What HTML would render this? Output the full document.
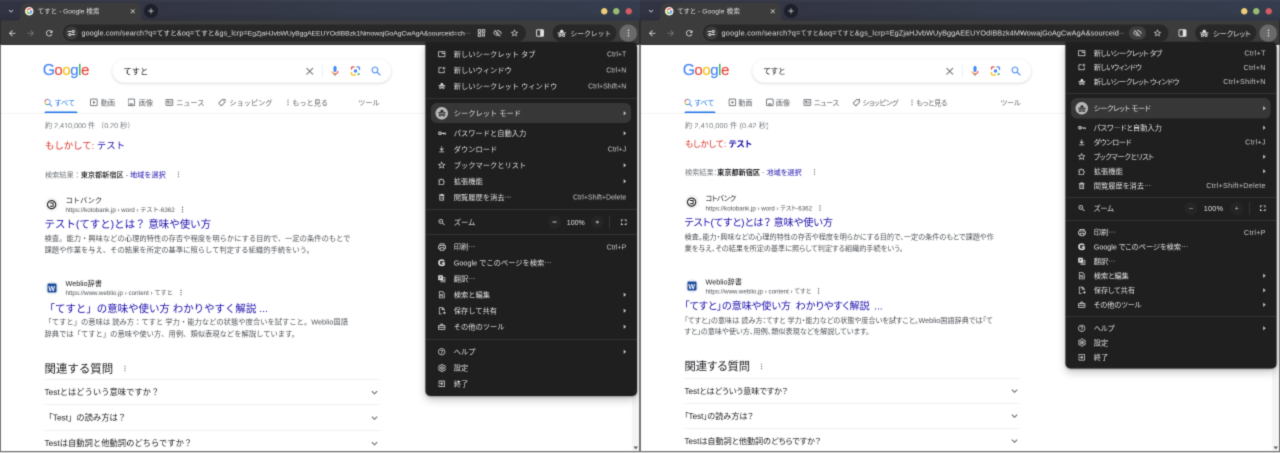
<!DOCTYPE html>
<html lang="ja"><head><meta charset="utf-8"><title>てすと - Google 検索</title>
<style>
html,body{margin:0;padding:0;background:#202124;overflow:hidden}
body{width:1280px;height:453px;position:relative;font-family:"Liberation Sans","Noto Sans CJK JP",sans-serif}
.win{position:absolute;top:0;width:1280px;height:906px;transform:scale(.5);transform-origin:0 0;overflow:hidden;background:#fff;will-change:transform;filter:url(#soft)}
.win *{box-sizing:border-box}
.t{position:absolute;white-space:nowrap;margin:0}
.b{position:absolute}
.i{position:absolute;display:block;overflow:visible}
.R .t{font-feature-settings:"palt" 1}
.R .np{font-feature-settings:normal}
b{font-weight:700}
.url i,.url u{font-style:normal;text-decoration:none;letter-spacing:0}
u.e,.url u{text-decoration:none;position:relative;top:-.33em}
.L .url i{font-size:13.5px}
.R .url i{font-size:12px}
.L .url .tl{letter-spacing:-.1px;font-size:13.6px}
.R .url .tl{letter-spacing:.2px}
.url u{font-size:11px;letter-spacing:-.5px}
u.e{letter-spacing:-.5px}

</style></head>
<body>
<svg width="0" height="0" style="position:absolute"><filter id="soft" x="0" y="0" width="100%" height="100%" color-interpolation-filters="sRGB"><feConvolveMatrix order="3" kernelMatrix="0.025 0.1 0.025 0.1 0.5 0.1 0.025 0.1 0.025" edgeMode="duplicate" preserveAlpha="true"/></filter></svg>
<div class="win L" style="left:0px">
<div class="t logo np" style="left:85.500px;top:117.200px;font-size:29.800px;line-height:44px;letter-spacing:-.750px;-webkit-text-stroke:.300px currentColor"><span style="color:#4285f4;font-size:31.500px;letter-spacing:-1.200px">G</span><span style="color:#ea4335">o</span><span style="color:#fbbc05">o</span><span style="color:#4285f4">g</span><span style="color:#34a853">l</span><span style="color:#ea4335">e</span></div>
<div class="b" style="left:225px;top:119px;width:557px;height:46px;background:#fff;border-radius:24px;box-shadow:0 2px 5px 1px rgba(64,60,67,.15)"></div>
<div class="t" style="left:247px;top:131px;font-size:16.5px;line-height:24px;color:#202124;">てすと</div>
<svg class="i" style="left:606.5px;top:129.5px" width="25" height="25" viewBox="0 0 24 24" fill="#70757a" ><path d="M19 6.41L17.59 5 12 10.59 6.41 5 5 6.41 10.59 12 5 17.59 6.41 19 12 13.41 17.59 19 19 17.59 13.41 12z"/></svg>
<div class="b" style="left:643.5px;top:128px;width:1px;height:28px;background:#e2e4e7"></div>
<svg class="i" style="left:658px;top:130px" width="24" height="24" viewBox="0 0 24 24"><rect x="9" y="2" width="6" height="12" rx="3" fill="#4285f4"/><path d="M11 18.920h2V22h-2z" fill="#34a853"/><path d="M7 12H5c0 1.930.780 3.680 2.050 4.950l1.410-1.410C7.560 14.630 7 13.380 7 12z" fill="#fbbc05"/><path d="M12 17c-1.380 0-2.630-.560-3.540-1.470l-1.410 1.410C8.320 18.220 10.070 19 12 19c3.870 0 7-3.130 7-7h-2c0 2.760-2.240 5-5 5z" fill="#ea4335"/></svg>
<svg class="i" style="left:699px;top:130px" width="24" height="24" viewBox="0 0 24 24"><path d="M4 8V6.500A2.500 2.500 0 0 1 6.500 4H9" fill="none" stroke="#ea4335" stroke-width="2.400" stroke-linecap="round"/><path d="M15 4h2.500A2.500 2.500 0 0 1 20 6.500V9" fill="none" stroke="#4285f4" stroke-width="2.400" stroke-linecap="round"/><path d="M4 15v2.500A2.500 2.500 0 0 0 6.500 20H12" fill="none" stroke="#fbbc05" stroke-width="2.400" stroke-linecap="round"/><circle cx="12" cy="12" r="3.300" fill="#4285f4"/><circle cx="18.300" cy="18.300" r="2" fill="#34a853"/></svg>
<svg class="i" style="left:740px;top:129.5px" width="25" height="25" viewBox="0 0 24 24" fill="#4285f4" ><path d="M15.5 14h-.79l-.28-.27C15.41 12.59 16 11.11 16 9.5 16 5.91 13.09 3 9.5 3S3 5.91 3 9.5 5.91 16 9.5 16c1.61 0 3.09-.59 4.23-1.57l.27.28v.79l5 4.99L20.49 19l-4.99-5zm-6 0C7.01 14 5 11.99 5 9.5S7.01 5 9.5 5 14 7.01 14 9.5 11.99 14 9.5 14z"/></svg>
<svg class="i" style="left:86.5px;top:196px" width="19" height="19" viewBox="0 0 16 16"><circle cx="6.800" cy="6.800" r="4.500" fill="none" stroke="#4285f4" stroke-width="1.300"/><path d="M2.300 6.800a4.500 4.500 0 0 1 4.500-4.500" fill="none" stroke="#ea4335" stroke-width="1.300"/><path d="M2.300 6.800a4.500 4.500 0 0 0 2.100 3.800" fill="none" stroke="#fbbc05" stroke-width="1.300"/><path d="M4.400 10.600a4.500 4.500 0 0 0 4 .400" fill="none" stroke="#34a853" stroke-width="1.300"/><path d="M10.200 10.200l3.800 3.800" stroke="#4285f4" stroke-width="1.500" stroke-linecap="round"/></svg>
<div class="t" style="left:109px;top:196px;font-size:14.3px;line-height:20px;color:#1a73e8;letter-spacing:0px">すべて</div>
<svg class="i" style="left:178.75px;top:196.25px" width="17.5" height="17.5" viewBox="0 0 16 16"><rect x="2" y="2" width="12" height="12" rx="1.500" fill="none" stroke="#5f6368" stroke-width="1.500"/><path d="M6.500 5.200v5.600L11 8z" fill="#5f6368"/></svg>
<div class="t" style="left:201.5px;top:196px;font-size:14.3px;line-height:20px;color:#5f6368;letter-spacing:0px">動画</div>
<svg class="i" style="left:253.75px;top:196.25px" width="17.5" height="17.5" viewBox="0 0 16 16"><rect x="2" y="2" width="12" height="12" rx="1.500" fill="none" stroke="#5f6368" stroke-width="1.500"/><path d="M4 12l2.500-3.200 1.800 2.200 1.500-1.700L12 12z" fill="#5f6368"/></svg>
<div class="t" style="left:277.5px;top:196px;font-size:14.3px;line-height:20px;color:#5f6368;letter-spacing:0px">画像</div>
<svg class="i" style="left:329.75px;top:196.25px" width="17.5" height="17.5" viewBox="0 0 16 16"><rect x="1.800" y="2.500" width="12.400" height="11" rx="1.200" fill="none" stroke="#5f6368" stroke-width="1.500"/><rect x="4" y="5" width="4" height="3.500" fill="#5f6368"/><path d="M9.500 5.500h2.500M9.500 8h2.500M4 10.800h8" stroke="#5f6368" stroke-width="1.200"/></svg>
<div class="t" style="left:352.5px;top:196px;font-size:14.3px;line-height:20px;color:#5f6368;letter-spacing:0px">ニュース</div>
<svg class="i" style="left:435.5px;top:197px" width="16" height="16" viewBox="0 0 16 16"><path d="M8.700 1.800h5.500v5.500l-6.800 6.800a1 1 0 0 1-1.400 0L1.900 10a1 1 0 0 1 0-1.400z" fill="none" stroke="#5f6368" stroke-width="1.500" stroke-linejoin="round"/><circle cx="11.300" cy="4.700" r="1" fill="#5f6368"/></svg>
<div class="t" style="left:459px;top:196px;font-size:14.3px;line-height:20px;color:#5f6368;letter-spacing:0px">ショッピング</div>
<svg class="i" style="left:573px;top:196px" width="6" height="18" viewBox="0 0 6 18"><circle cx="3" cy="4.4" r="1.25" fill="#5f6368"/><circle cx="3" cy="9" r="1.25" fill="#5f6368"/><circle cx="3" cy="13.6" r="1.25" fill="#5f6368"/></svg>
<div class="t" style="left:584.5px;top:196px;font-size:14.3px;line-height:20px;color:#5f6368;letter-spacing:0px">もっと見る</div>
<div class="t" style="left:716.5px;top:196px;font-size:14.3px;line-height:20px;color:#5f6368;">ツール</div>
<div class="b" style="left:89px;top:222.5px;width:66px;height:3px;background:#1a73e8;border-radius:3px 3px 0 0"></div>
<div class="b" style="left:0px;top:226.5px;width:1280px;height:1px;background:#e4e6e9"></div>
<div class="t" style="left:90px;top:241px;font-size:14.3px;line-height:20px;color:#70757a;letter-spacing:0px">約 2,410,000 件 （0.20 秒）</div>
<div class="t" style="left:90px;top:279px;font-size:18.8px;line-height:26px;color:#1a0dab;"><span style="color:#d93025">もしかして:</span> <b style="color:#1a0dab;font-weight:400">テスト</b></div>
<div class="t" style="left:90px;top:339.5px;font-size:14.3px;line-height:20px;color:#70757a;"><span style="color:#70757a">検索結果：</span><b style="color:#202124;font-weight:500">東京都新宿区</b> <span style="color:#70757a">-</span> <span style="color:#1a0dab">地域を選択</span></div>
<svg class="i" style="left:354px;top:339.5px" width="6" height="18" viewBox="0 0 6 18"><circle cx="3" cy="4.4" r="1.25" fill="#70757a"/><circle cx="3" cy="9" r="1.25" fill="#70757a"/><circle cx="3" cy="13.6" r="1.25" fill="#70757a"/></svg>
<div class="b" style="left:89.5px;top:395px;width:28px;height:28px;background:#f1f3f4;border-radius:50%"></div>
<svg class="i" style="left:93.25px;top:398.75px" width="20.5" height="20.5" viewBox="0 0 18 18"><circle cx="9" cy="9" r="7.200" fill="#fff" stroke="#111" stroke-width="1.900"/><path d="M5.800 6.200h5.800v5.600H5.800" fill="none" stroke="#111" stroke-width="1.700"/></svg>
<div class="t" style="left:131px;top:391px;font-size:14.5px;line-height:20px;color:#202124;letter-spacing:0px">コトバンク</div>
<div class="t" style="left:131px;top:411px;font-size:12.4px;line-height:18px;color:#4d5156;">https://kotobank.jp › word › テスト-6362</div>
<svg class="i" style="left:362px;top:410px" width="6" height="18" viewBox="0 0 6 18"><circle cx="3" cy="4.4" r="1.25" fill="#4d5156"/><circle cx="3" cy="9" r="1.25" fill="#4d5156"/><circle cx="3" cy="13.6" r="1.25" fill="#4d5156"/></svg>
<div class="t" style="left:89px;top:433.5px;font-size:20.9px;line-height:28px;color:#1a0dab;">テスト(てすと)とは？ 意味や使い方</div>
<div class="t" style="left:89px;top:466px;font-size:14.6px;line-height:22px;color:#4d5156;">検査。能力・興味などの心理的特性の存否や程度を明らかにする目的で、一定の条件のもとで</div>
<div class="t" style="left:89px;top:489px;font-size:14.6px;line-height:22px;color:#4d5156;">課題や作業を与え、その結果を所定の基準に照らして判定する組織的手続をいう。</div>
<div class="b" style="left:89.5px;top:562px;width:28px;height:28px;background:#f1f3f4;border-radius:50%"></div>
<div class="b" style="left:94.5px;top:567px;width:18px;height:18px;background:#1b4a9c;border-radius:2px"></div>
<div class="t np" style="left:96.8px;top:568.5px;font-size:14px;line-height:16px;color:#fff;"><b>W</b></div>
<div class="t" style="left:131px;top:557px;font-size:14.5px;line-height:20px;color:#202124;">Weblio辞書</div>
<div class="t" style="left:131px;top:577px;font-size:12.4px;line-height:18px;color:#4d5156;">https://www.weblio.jp › content › てすと</div>
<svg class="i" style="left:359px;top:576px" width="6" height="18" viewBox="0 0 6 18"><circle cx="3" cy="4.4" r="1.25" fill="#4d5156"/><circle cx="3" cy="9" r="1.25" fill="#4d5156"/><circle cx="3" cy="13.6" r="1.25" fill="#4d5156"/></svg>
<div class="t" style="left:89px;top:603px;font-size:20.9px;line-height:28px;color:#1a0dab;word-spacing:0px">「てすと」の意味や使い方 わかりやすく解説 ...</div>
<div class="t" style="left:89px;top:633px;font-size:14.6px;line-height:22px;color:#4d5156;">「てすと」の意味は 読み方：てすと 学力・能力などの状態や度合いを試すこと。Weblio国語</div>
<div class="t" style="left:89px;top:656.5px;font-size:14.6px;line-height:22px;color:#4d5156;">辞典では「てすと」の意味や使い方、用例、類似表現などを解説しています。</div>
<div class="t" style="left:89px;top:722px;font-size:22.9px;line-height:30px;color:#202124;">関連する質問</div>
<svg class="i" style="left:247px;top:728px" width="6" height="18" viewBox="0 0 6 18"><circle cx="3" cy="4.4" r="1.25" fill="#70757a"/><circle cx="3" cy="9" r="1.25" fill="#70757a"/><circle cx="3" cy="13.6" r="1.25" fill="#70757a"/></svg>
<div class="b" style="left:89px;top:758px;width:671px;height:1px;background:#dfe1e5"></div>
<div class="b" style="left:89px;top:809px;width:671px;height:1px;background:#dfe1e5"></div>
<div class="b" style="left:89px;top:860px;width:671px;height:1px;background:#dfe1e5"></div>
<div class="t" style="left:89px;top:773px;font-size:16.6px;line-height:24px;color:#202124;">Testとはどういう意味ですか？</div>
<svg class="i" style="left:737px;top:773px" width="24" height="24" viewBox="0 0 24 24" fill="#5f6368" ><path d="M16.59 8.59L12 13.17 7.41 8.59 6 10l6 6 6-6z"/></svg>
<div class="t" style="left:89px;top:824px;font-size:16.6px;line-height:24px;color:#202124;">「Test」の読み方は？</div>
<svg class="i" style="left:737px;top:824px" width="24" height="24" viewBox="0 0 24 24" fill="#5f6368" ><path d="M16.59 8.59L12 13.17 7.41 8.59 6 10l6 6 6-6z"/></svg>
<div class="t" style="left:89px;top:874.5px;font-size:16.6px;line-height:24px;color:#202124;">Testは自動詞と他動詞のどちらですか？</div>
<svg class="i" style="left:737px;top:874.5px" width="24" height="24" viewBox="0 0 24 24" fill="#5f6368" ><path d="M16.59 8.59L12 13.17 7.41 8.59 6 10l6 6 6-6z"/></svg>
<div class="b" style="left:1265px;top:89px;width:13px;height:813px;background:#f4f4f4;border-left:1px solid #e9e9e9"></div><svg class="i" style="left:1267px;top:893px" width="9" height="6" viewBox="0 0 9 6"><path d="M0 0h9L4.500 6z" fill="#5c5c5c"/></svg>
<div class="b" style="left:0px;top:0px;width:1280px;height:90px;background:#3c3c3c"></div>
<div class="b" style="left:0px;top:0px;width:1280px;height:41px;background:linear-gradient(rgba(255,255,255,.04) 0,rgba(255,255,255,0) 6px,rgba(0,0,0,0) 26px,rgba(0,0,0,.10) 41px),linear-gradient(90deg,#313242 0,#323443 20%,#353b4a 55%,#343c4d 100%)"></div>
<div class="b" style="left:41px;top:6px;width:241px;height:36px;background:#3c3c3c;border-radius:10px 10px 0 0"></div>
<svg class="i" style="left:31px;top:31.5px" width="10" height="10" viewBox="0 0 10 10"><path d="M10 0v10H0A10 10 0 0 0 10 0z" fill="#3c3c3c"/></svg>
<svg class="i" style="left:282px;top:31.5px" width="10" height="10" viewBox="0 0 10 10"><path d="M0 0v10h10A10 10 0 0 1 0 0z" fill="#3c3c3c"/></svg>
<div class="b" style="left:0px;top:87.5px;width:1280px;height:1.5px;background:#2f2f2f"></div>
<svg class="i" style="left:13px;top:13px" width="18" height="18" viewBox="0 0 24 24" fill="#e3e3e3" ><path d="M16.59 8.59L12 13.17 7.41 8.59 6 10l6 6 6-6z"/></svg>
<div class="b" style="left:50px;top:13.5px;width:17px;height:17px;background:#fff;border-radius:50%"></div>
<svg class="i" style="left:51.5px;top:15px" width="14" height="14" viewBox="0 0 24 24"><path d="M21.6 12.2c0-.7-.1-1.4-.2-2H12v3.9h5.4c-.2 1.2-.9 2.3-2 3v2.5h3.2c1.9-1.7 3-4.3 3-7.4z" fill="#4285f4"/><path d="M12 22c2.7 0 5-.9 6.6-2.4l-3.2-2.5c-.9.6-2 1-3.4 1-2.6 0-4.800-1.800-5.600-4.100H3.100v2.600C4.700 19.800 8.100 22 12 22z" fill="#34a853"/><path d="M6.400 14c-.2-.6-.3-1.300-.3-2s.1-1.400.3-2V7.400H3.100C2.400 8.800 2 10.300 2 12s.4 3.200 1.100 4.600l3.300-2.600z" fill="#fbbc05"/><path d="M12 5.900c1.500 0 2.800.5 3.800 1.500l2.900-2.900C17 2.900 14.700 2 12 2 8.100 2 4.700 4.200 3.100 7.400l3.300 2.600C7.200 7.700 9.400 5.900 12 5.900z" fill="#ea4335"/></svg>
<div class="t" style="left:75px;top:14.5px;font-size:13.2px;line-height:16px;color:#e3e3e3;letter-spacing:0px">てすと - Google 検索</div>
<svg class="i" style="left:257.5px;top:14.5px" width="15" height="15" viewBox="0 0 24 24" fill="#e3e3e3" ><path d="M19 6.41L17.59 5 12 10.59 6.41 5 5 6.41 10.59 12 5 17.59 6.41 19 12 13.41 17.59 19 19 17.59 13.41 12z"/></svg>
<div class="b" style="left:288px;top:8px;width:28px;height:28px;background:#1d202b;border-radius:50%"></div>
<svg class="i" style="left:293px;top:13px" width="18" height="18" viewBox="0 0 24 24" fill="#e3e3e3" ><path d="M19 13h-6v6h-2v-6H5v-2h6V5h2v6h6v2z"/></svg>
<div class="b" style="left:1201.5px;top:15.5px;width:13px;height:13px;background:#f0cb78;border-radius:50%"></div>
<div class="b" style="left:1225.5px;top:15.5px;width:13px;height:13px;background:#9abd73;border-radius:50%"></div>
<div class="b" style="left:1250.5px;top:15.5px;width:13px;height:13px;background:#d65a62;border-radius:50%"></div>
<svg class="i" style="left:14.5px;top:56.5px" width="19" height="19" viewBox="0 0 24 24" fill="#e3e3e3" ><path d="M20 11H7.83l5.59-5.59L12 4l-8 8 8 8 1.41-1.41L7.83 13H20v-2z"/></svg>
<svg class="i" style="left:51.5px;top:56.5px" width="19" height="19" viewBox="0 0 24 24" fill="#7d7d7d" ><path d="M12 4l-1.41 1.41L16.17 11H4v2h12.17l-5.58 5.59L12 20l8-8z"/></svg>
<svg class="i" style="left:88.5px;top:56.5px" width="19" height="19" viewBox="0 0 24 24" fill="#e3e3e3" ><path d="M17.65 6.35C16.2 4.9 14.21 4 12 4c-4.42 0-7.99 3.58-7.99 8s3.57 8 7.99 8c3.73 0 6.84-2.55 7.73-6h-2.08c-.82 2.33-3.04 4-5.65 4-3.31 0-6-2.69-6-6s2.69-6 6-6c1.66 0 3.14.69 4.22 1.78L13 11h7V4l-2.35 2.35z"/></svg>
<div class="b" style="left:126px;top:49px;width:926px;height:34px;background:#282828;border-radius:17px"></div>
<div class="b" style="left:130px;top:53px;width:26px;height:26px;background:#3c3c3c;border-radius:50%"></div>
<svg class="i" style="left:135px;top:58px" width="16" height="16" viewBox="0 0 16 16"><g stroke="#e3e3e3" stroke-width="2" fill="none" stroke-linecap="round"><path d="M1.500 5h6"/><path d="M8.500 11h6"/></g><circle cx="11.500" cy="5" r="2.200" fill="none" stroke="#e3e3e3" stroke-width="1.800"/><circle cx="4.500" cy="11" r="2.200" fill="none" stroke="#e3e3e3" stroke-width="1.800"/></svg>
<div class="t np url" style="left:163px;top:55px;width:790px;overflow:hidden;font-size:14.2px;line-height:22px;color:#e3e3e3;letter-spacing:0.32px">google.com/search?q=<i>てすと</i>&amp;oq=<i>てすと</i>&amp;gs_lcrp=<span class="tl">EgZjaHJvbWUyBggAEEUYOdIBBzk1NmowajGoAgCwAgA&amp;sourceid=ch</span><u>…</u></div>
<svg class="i" style="left:955px;top:58px" width="16" height="16" viewBox="0 0 16 16"><g fill="none" stroke="#e3e3e3" stroke-width="1.700"><rect x="1.500" y="1.500" width="5" height="5"/><rect x="9.500" y="1.500" width="5" height="5"/><rect x="1.500" y="9.500" width="5" height="5"/></g><g fill="#e3e3e3"><rect x="9" y="9" width="2.500" height="2.500"/><rect x="12.500" y="9" width="2.500" height="2.500"/><rect x="9" y="12.500" width="2.500" height="2.500"/><rect x="12.500" y="12.500" width="2.500" height="2.500"/></g></svg>
<svg class="i" style="left:986px;top:57px" width="18" height="18" viewBox="0 0 24 24"><path d="M1.800 12s3.700-6.300 10.200-6.300S22.200 12 22.200 12s-3.700 6.300-10.200 6.300S1.800 12 1.800 12z" fill="none" stroke="#e3e3e3" stroke-width="1.900"/><circle cx="12" cy="12" r="2.900" fill="none" stroke="#e3e3e3" stroke-width="1.900"/><path d="M5.300 3.300l15 17" stroke="#282828" stroke-width="4.200"/><path d="M4.200 3.800l15.300 17.200" stroke="#e3e3e3" stroke-width="1.900"/></svg>
<svg class="i" style="left:1020px;top:57px" width="18" height="18" viewBox="0 0 24 24" fill="#e3e3e3" ><path d="M22 9.24l-7.19-.62L12 2 9.19 8.63 2 9.24l5.46 4.73L5.82 21 12 17.27 18.18 21l-1.63-7.03L22 9.24zM12 15.4l-3.76 2.27 1-4.28-3.32-2.88 4.38-.38L12 6.1l1.71 4.04 4.38.38-3.32 2.88 1 4.28L12 15.4z"/></svg>
<svg class="i" style="left:1071px;top:57px" width="18" height="18" viewBox="0 0 18 18"><rect x="2" y="2.500" width="14" height="13" rx="2" fill="none" stroke="#e3e3e3" stroke-width="1.800"/><rect x="9.500" y="3" width="6" height="12" fill="#e3e3e3"/></svg>
<div class="b" style="left:1105px;top:49px;width:128px;height:34px;background:#282828;border-radius:17px"></div>
<svg class="i" style="left:1113.5px;top:56.5px" width="19" height="19" viewBox="0 0 24 24"><path d="M9 3.600h6l1.800 6.200H7.200z" fill="#e3e3e3"/><rect x="1.500" y="10" width="21" height="2.700" rx=".6" fill="#e3e3e3"/><circle cx="7.300" cy="17.400" r="2.700" fill="none" stroke="#e3e3e3" stroke-width="2.300"/><circle cx="16.700" cy="17.400" r="2.700" fill="none" stroke="#e3e3e3" stroke-width="2.300"/><path d="M10 16.800q2-1.300 4 0" fill="none" stroke="#e3e3e3" stroke-width="1.700"/></svg>
<div class="t" style="left:1141px;top:58px;font-size:13.6px;line-height:20px;color:#e3e3e3;">シークレット</div>
<div class="b" style="left:1239px;top:48.5px;width:35px;height:35px;background:#6a6a6a;border-radius:50%"></div>
<svg class="i" style="left:1253.5px;top:57px" width="6" height="18" viewBox="0 0 6 18"><circle cx="3" cy="3.5" r="1.6" fill="#e3e3e3"/><circle cx="3" cy="9" r="1.6" fill="#e3e3e3"/><circle cx="3" cy="14.5" r="1.6" fill="#e3e3e3"/></svg>
<div class="b" style="left:851px;top:84px;width:423px;height:707.5px;background:#1f1f1f;border-radius:3px 11px 10px 10px;box-shadow:0 8px 18px 0 rgba(0,0,0,.22),0 2px 5px 0 rgba(0,0,0,.22),0 0 0 1px rgba(0,0,0,.18)"></div>
<div class="b" style="left:851px;top:196px;width:423px;height:1px;background:#444746"></div>
<div class="b" style="left:851px;top:418px;width:423px;height:1px;background:#444746"></div>
<div class="b" style="left:851px;top:468.5px;width:423px;height:1px;background:#444746"></div>
<div class="b" style="left:851px;top:678px;width:423px;height:1px;background:#444746"></div>
<div class="b" style="left:862px;top:206px;width:400px;height:40px;background:#373737;border-radius:12px"></div>
<svg class="i" style="left:875px;top:99.5px" width="17" height="17" viewBox="0 0 24 24"><path d="M3 5h18v14H3z" fill="none" stroke="#e3e3e3" stroke-width="2" stroke-linejoin="round"/><path d="M13 5v4.500h8" fill="none" stroke="#e3e3e3" stroke-width="2" stroke-linejoin="round"/></svg>
<div class="t" style="left:907.5px;top:98.5px;font-size:14.5px;line-height:20px;color:#e3e3e3;letter-spacing:0px">新しいシークレット タブ</div>
<div class="t" style="right:27.5px;top:98px;font-size:14px;line-height:20px;color:#c7c7c7;letter-spacing:0px">Ctrl+T</div>
<svg class="i" style="left:875px;top:131.5px" width="17" height="17" viewBox="0 0 24 24"><path d="M12 5H4v14h15v-7" fill="none" stroke="#e3e3e3" stroke-width="2" stroke-linejoin="round"/><path d="M18 2v8M14 6h8" fill="none" stroke="#e3e3e3" stroke-width="2" stroke-linejoin="round"/></svg>
<div class="t" style="left:907.5px;top:130.5px;font-size:14.5px;line-height:20px;color:#e3e3e3;letter-spacing:0px">新しいウィンドウ</div>
<div class="t" style="right:27.5px;top:130px;font-size:14px;line-height:20px;color:#c7c7c7;letter-spacing:0px">Ctrl+N</div>
<svg class="i" style="left:875.75px;top:164.25px" width="15.5" height="15.5" viewBox="0 0 24 24"><path d="M9 3.600h6l1.800 6.200H7.200z" fill="#e3e3e3"/><rect x="1.500" y="10" width="21" height="2.700" rx=".6" fill="#e3e3e3"/><circle cx="7.300" cy="17.400" r="2.700" fill="none" stroke="#e3e3e3" stroke-width="2.300"/><circle cx="16.700" cy="17.400" r="2.700" fill="none" stroke="#e3e3e3" stroke-width="2.300"/><path d="M10 16.800q2-1.300 4 0" fill="none" stroke="#e3e3e3" stroke-width="1.700"/></svg>
<div class="t" style="left:907.5px;top:162.5px;font-size:14.5px;line-height:20px;color:#e3e3e3;letter-spacing:0px">新しいシークレット ウィンドウ</div>
<div class="t" style="right:27.5px;top:162px;font-size:14px;line-height:20px;color:#c7c7c7;letter-spacing:0px">Ctrl+Shift+N</div>
<div class="b" style="left:871px;top:213.5px;width:25px;height:25px;background:#b9b9b9;border-radius:50%"></div>
<svg class="i" style="left:874.5px;top:217px" width="18" height="18" viewBox="0 0 24 24"><path d="M9 3.600h6l1.800 6.200H7.200z" fill="#2a2a2a"/><rect x="1.500" y="10" width="21" height="2.700" rx=".6" fill="#2a2a2a"/><circle cx="7.300" cy="17.400" r="2.700" fill="none" stroke="#2a2a2a" stroke-width="2.300"/><circle cx="16.700" cy="17.400" r="2.700" fill="none" stroke="#2a2a2a" stroke-width="2.300"/><path d="M10 16.800q2-1.300 4 0" fill="none" stroke="#2a2a2a" stroke-width="1.700"/></svg>
<div class="t" style="left:907.5px;top:216.5px;font-size:14.5px;line-height:20px;color:#e3e3e3;letter-spacing:0px">シークレット モード</div>
<svg class="i" style="left:1240.5px;top:217.5px" width="17" height="17" viewBox="0 0 24 24" fill="#c7c7c7" ><path d="M9 6l7 6-7 6z"/></svg>
<svg class="i" style="left:875px;top:257.5px" width="17" height="17" viewBox="0 0 24 24"><circle cx="6.800" cy="12" r="3.600" fill="none" stroke="#e3e3e3" stroke-width="2.600"/><path d="M10.500 12h11.500v3.800M17.500 12v3.300" fill="none" stroke="#e3e3e3" stroke-width="2.600"/></svg>
<div class="t" style="left:907.5px;top:256.5px;font-size:14.5px;line-height:20px;color:#e3e3e3;letter-spacing:0px">パスワードと自動入力</div>
<svg class="i" style="left:1240.5px;top:257.5px" width="17" height="17" viewBox="0 0 24 24" fill="#c7c7c7" ><path d="M9 6l7 6-7 6z"/></svg>
<svg class="i" style="left:875px;top:289.5px" width="17" height="17" viewBox="0 0 24 24"><path d="M12 4v10.500M7 10l5 5 5-5M5 19.500h14" fill="none" stroke="#e3e3e3" stroke-width="2" stroke-linejoin="round"/></svg>
<div class="t" style="left:907.5px;top:288.5px;font-size:14.5px;line-height:20px;color:#e3e3e3;letter-spacing:0px">ダウンロード</div>
<div class="t" style="right:27.5px;top:288px;font-size:14px;line-height:20px;color:#c7c7c7;letter-spacing:0px">Ctrl+J</div>
<svg class="i" style="left:874.25px;top:320.75px" width="18.5" height="18.5" viewBox="0 0 24 24" fill="#e3e3e3" ><path d="M22 9.24l-7.19-.62L12 2 9.19 8.63 2 9.24l5.46 4.73L5.82 21 12 17.27 18.18 21l-1.63-7.03L22 9.24zM12 15.4l-3.76 2.27 1-4.28-3.32-2.88 4.38-.38L12 6.1l1.71 4.04 4.38.38-3.32 2.88 1 4.28L12 15.4z"/></svg>
<div class="t" style="left:907.5px;top:320.5px;font-size:14.5px;line-height:20px;color:#e3e3e3;letter-spacing:0px">ブックマークとリスト</div>
<svg class="i" style="left:1240.5px;top:321.5px" width="17" height="17" viewBox="0 0 24 24" fill="#c7c7c7" ><path d="M9 6l7 6-7 6z"/></svg>
<svg class="i" style="left:875px;top:353.5px" width="17" height="17" viewBox="0 0 24 24"><path d="M4 8H8.200a2.300 2.300 0 1 1 4.600 0H17V12.200a2.300 2.300 0 1 1 0 4.600V21H4V16.800a2.300 2.300 0 1 0 0-4.600z" fill="none" stroke="#e3e3e3" stroke-width="2" stroke-linejoin="round"/></svg>
<div class="t" style="left:907.5px;top:352.5px;font-size:14.5px;line-height:20px;color:#e3e3e3;letter-spacing:0px">拡張機能</div>
<svg class="i" style="left:1240.5px;top:353.5px" width="17" height="17" viewBox="0 0 24 24" fill="#c7c7c7" ><path d="M9 6l7 6-7 6z"/></svg>
<svg class="i" style="left:875px;top:385.5px" width="17" height="17" viewBox="0 0 24 24"><path d="M6.500 7.500h11V20h-11z" fill="none" stroke="#e3e3e3" stroke-width="2" stroke-linejoin="round"/><path d="M4 5.500h16M9.500 3.500h5" fill="none" stroke="#e3e3e3" stroke-width="2" stroke-linejoin="round"/><path d="M10 11v5.500M14 11v5.500" fill="none" stroke="#e3e3e3" stroke-width="1.500"/></svg>
<div class="t" style="left:907.5px;top:384.5px;font-size:14.5px;line-height:20px;color:#e3e3e3;letter-spacing:0px">閲覧履歴を消去<u class="e">…</u></div>
<div class="t" style="right:27.5px;top:384px;font-size:14px;line-height:20px;color:#c7c7c7;letter-spacing:0px">Ctrl+Shift+Delete</div>
<svg class="i" style="left:875px;top:435.5px" width="17" height="17" viewBox="0 0 24 24" fill="#e3e3e3" ><path d="M15.5 14h-.79l-.28-.27C15.41 12.59 16 11.11 16 9.5 16 5.91 13.09 3 9.5 3S3 5.91 3 9.5 5.91 16 9.5 16c1.61 0 3.09-.59 4.23-1.57l.27.28v.79l5 4.99L20.49 19l-4.99-5zm-6 0C7.01 14 5 11.99 5 9.5S7.01 5 9.5 5 14 7.01 14 9.5 11.99 14 9.5 14zM12 10h-2v2H9v-2H7V9h2V7h1v2h2v1z"/></svg>
<div class="t" style="left:907.5px;top:434.5px;font-size:14.5px;line-height:20px;color:#e3e3e3;letter-spacing:0px">ズーム</div>
<div class="b" style="left:1096px;top:431px;width:26px;height:26px;background:#252525;border-radius:50%"></div>
<div class="b" style="left:1181.5px;top:431px;width:26px;height:26px;background:#252525;border-radius:50%"></div>
<div class="b" style="left:1105px;top:443.2px;width:8px;height:1.6px;background:#c8c8c8"></div>
<div class="b" style="left:1191px;top:443.2px;width:7px;height:1.6px;background:#c8c8c8"></div>
<div class="b" style="left:1193.7px;top:440.5px;width:1.6px;height:7px;background:#c8c8c8"></div>
<div class="t np" style="left:1121.5px;width:60px;text-align:center;top:434.5px;font-size:14px;line-height:20px;color:#e3e3e3;letter-spacing:0px">100%</div>
<div class="b" style="left:1218.5px;top:431px;width:1px;height:26px;background:#444746"></div>
<svg class="i" style="left:1238px;top:434.5px" width="19" height="19" viewBox="0 0 24 24" fill="#e3e3e3" ><path d="M7 14H5v5h5v-2H7v-3zm-2-4h2V7h3V5H5v5zm12 7h-3v2h5v-5h-2v3zM14 5v2h3v3h2V5h-5z"/></svg>
<svg class="i" style="left:874.5px;top:484.5px" width="18" height="18" viewBox="0 0 24 24"><path d="M6.500 8V3.500h11V8" fill="none" stroke="#e3e3e3" stroke-width="2" stroke-linejoin="round"/><rect x="3" y="8" width="18" height="9" rx="2.500" fill="none" stroke="#e3e3e3" stroke-width="2" stroke-linejoin="round"/><path d="M7 14h10v6.500H7z" fill="#1f1f1f" stroke="#e3e3e3" stroke-width="2" stroke-linejoin="round"/><circle cx="17.500" cy="11.200" r="1" fill="#e3e3e3"/></svg>
<div class="t" style="left:907.5px;top:484px;font-size:14.5px;line-height:20px;color:#e3e3e3;letter-spacing:0px">印刷<u class="e">…</u></div>
<div class="t" style="right:27.5px;top:483.5px;font-size:14px;line-height:20px;color:#c7c7c7;letter-spacing:0px">Ctrl+P</div>
<div class="t np" style="left:876px;top:516px;font-size:18.5px;line-height:20px;color:#e3e3e3;-webkit-text-stroke:.6px #e3e3e3"><b>G</b></div>
<div class="t" style="left:907.5px;top:516px;font-size:14.5px;line-height:20px;color:#e3e3e3;letter-spacing:0px">Google でこのページを検索<u class="e">…</u></div>
<svg class="i" style="left:875px;top:549px" width="17" height="17" viewBox="0 0 24 24"><path d="M3 3h11v12H3z" fill="#e3e3e3" stroke="#e3e3e3" stroke-width="2" stroke-linejoin="round"/><path d="M5.500 7h6M8.500 5.500v1.500M6 12c2.200-1 3.800-2.800 4.300-5" fill="none" stroke="#1f1f1f" stroke-width="1.500"/><path d="M14 9h7v12H10v-6" fill="none" stroke="#e3e3e3" stroke-width="2" stroke-linejoin="round"/><path d="M13.200 18.500l2.300-6 2.300 6M14 17h3" fill="none" stroke="#e3e3e3" stroke-width="1.400"/></svg>
<div class="t" style="left:907.5px;top:548px;font-size:14.5px;line-height:20px;color:#e3e3e3;letter-spacing:0px">翻訳<u class="e">…</u></div>
<svg class="i" style="left:875px;top:581px" width="17" height="17" viewBox="0 0 24 24"><path d="M5 3h9l5 5v13H5z" fill="none" stroke="#e3e3e3" stroke-width="2" stroke-linejoin="round"/><circle cx="11.500" cy="13" r="2.800" fill="none" stroke="#e3e3e3" stroke-width="1.800"/><path d="M13.500 15l2.500 2.500" stroke="#e3e3e3" stroke-width="1.800"/></svg>
<div class="t" style="left:907.5px;top:580px;font-size:14.5px;line-height:20px;color:#e3e3e3;letter-spacing:0px">検索と編集</div>
<svg class="i" style="left:1240.5px;top:581px" width="17" height="17" viewBox="0 0 24 24" fill="#c7c7c7" ><path d="M9 6l7 6-7 6z"/></svg>
<svg class="i" style="left:875px;top:613px" width="17" height="17" viewBox="0 0 24 24"><path d="M19 12V8l-5-5H5v18h7" fill="none" stroke="#e3e3e3" stroke-width="2" stroke-linejoin="round"/><path d="M13 3v6h6" fill="none" stroke="#e3e3e3" stroke-width="2" stroke-linejoin="round"/><path d="M15 18h7M19 15l3 3-3 3" fill="none" stroke="#e3e3e3" stroke-width="2" stroke-linejoin="round"/></svg>
<div class="t" style="left:907.5px;top:612px;font-size:14.5px;line-height:20px;color:#e3e3e3;letter-spacing:0px">保存して共有</div>
<svg class="i" style="left:1240.5px;top:613px" width="17" height="17" viewBox="0 0 24 24" fill="#c7c7c7" ><path d="M9 6l7 6-7 6z"/></svg>
<svg class="i" style="left:875px;top:645px" width="17" height="17" viewBox="0 0 24 24"><rect x="3" y="8" width="18" height="12" rx="2" fill="none" stroke="#e3e3e3" stroke-width="2" stroke-linejoin="round"/><path d="M9 8V4.500h6V8M3 13.500h18" fill="none" stroke="#e3e3e3" stroke-width="2" stroke-linejoin="round"/></svg>
<div class="t" style="left:907.5px;top:644px;font-size:14.5px;line-height:20px;color:#e3e3e3;letter-spacing:0px">その他のツール</div>
<svg class="i" style="left:1240.5px;top:645px" width="17" height="17" viewBox="0 0 24 24" fill="#c7c7c7" ><path d="M9 6l7 6-7 6z"/></svg>
<svg class="i" style="left:875px;top:695px" width="17" height="17" viewBox="0 0 24 24" fill="#e3e3e3" ><path d="M11 18h2v-2h-2v2zm1-16C6.48 2 2 6.48 2 12s4.48 10 10 10 10-4.48 10-10S17.52 2 12 2zm0 18c-4.41 0-8-3.59-8-8s3.59-8 8-8 8 3.59 8 8-3.59 8-8 8zm0-14c-2.21 0-4 1.79-4 4h2c0-1.1.9-2 2-2s2 .9 2 2c0 2-3 1.75-3 5h2c0-2.25 3-2.5 3-5 0-2.21-1.79-4-4-4z"/></svg>
<div class="t" style="left:907.5px;top:694px;font-size:14.5px;line-height:20px;color:#e3e3e3;letter-spacing:0px">ヘルプ</div>
<svg class="i" style="left:1240.5px;top:695px" width="17" height="17" viewBox="0 0 24 24" fill="#c7c7c7" ><path d="M9 6l7 6-7 6z"/></svg>
<svg class="i" style="left:874.5px;top:726.5px" width="18" height="18" viewBox="0 0 24 24"><path d="M19.14 12.94c.04-.3.06-.61.06-.94 0-.32-.02-.64-.07-.94l2.03-1.58c.18-.14.23-.41.12-.61l-1.92-3.32c-.12-.22-.37-.29-.59-.22l-2.39.96c-.5-.38-1.03-.7-1.62-.94l-.36-2.54c-.04-.24-.24-.41-.48-.41h-3.84c-.24 0-.43.17-.47.41l-.36 2.54c-.59.24-1.13.57-1.62.94l-2.39-.96c-.22-.08-.47 0-.59.22L2.74 8.87c-.12.21-.08.47.12.61l2.03 1.58c-.05.3-.09.63-.09.94s.02.64.07.94l-2.03 1.58c-.18.14-.23.41-.12.61l1.92 3.32c.12.22.37.29.59.22l2.39-.96c.5.38 1.03.7 1.62.94l.36 2.54c.05.24.24.41.48.41h3.84c.24 0 .44-.17.47-.41l.36-2.54c.59-.24 1.13-.56 1.62-.94l2.39.96c.22.08.47 0 .59-.22l1.92-3.32c.12-.22.07-.47-.12-.61l-2.01-1.58zM12 15.6c-1.98 0-3.6-1.62-3.6-3.6s1.62-3.6 3.6-3.6 3.6 1.62 3.6 3.6-1.62 3.6-3.6 3.6z" fill="none" stroke="#e3e3e3" stroke-width="1.700" stroke-linejoin="round"/><circle cx="12" cy="12" r="1.600" fill="#e3e3e3"/></svg>
<div class="t" style="left:907.5px;top:726px;font-size:14.5px;line-height:20px;color:#e3e3e3;letter-spacing:0px">設定</div>
<svg class="i" style="left:875px;top:759px" width="17" height="17" viewBox="0 0 24 24" fill="#e3e3e3" ><path d="M19 3H5c-1.11 0-2 .9-2 2v4h2V5h14v14H5v-4H3v4c0 1.1.89 2 2 2h14c1.1 0 2-.9 2-2V5c0-1.1-.9-2-2-2zm-8.92 12.58L11.5 17l5-5-5-5-1.42 1.41L12.67 11H3v2h9.67l-2.59 2.58z"/></svg>
<div class="t" style="left:907.5px;top:758px;font-size:14.5px;line-height:20px;color:#e3e3e3;letter-spacing:0px">終了</div>
<div class="b" style="left:0px;top:41px;width:2px;height:48px;background:#2c2c2c"></div><div class="b" style="left:1278px;top:41px;width:2px;height:48px;background:#2c2c2c"></div><div class="b" style="left:0px;top:89px;width:2px;height:815px;background:#757575"></div><div class="b" style="left:1278px;top:89px;width:2px;height:815px;background:#757575"></div><div class="b" style="left:0px;top:901.5px;width:1280px;height:2.5px;background:#707070"></div><div class="b" style="left:0px;top:904px;width:1280px;height:2px;background:#dcdcdc"></div>
</div>
<div class="win R" style="left:640px">
<div class="t logo np" style="left:85.500px;top:117.200px;font-size:29.800px;line-height:44px;letter-spacing:-.750px;-webkit-text-stroke:.300px currentColor"><span style="color:#4285f4;font-size:31.500px;letter-spacing:-1.200px">G</span><span style="color:#ea4335">o</span><span style="color:#fbbc05">o</span><span style="color:#4285f4">g</span><span style="color:#34a853">l</span><span style="color:#ea4335">e</span></div>
<div class="b" style="left:225px;top:119px;width:557px;height:46px;background:#fff;border-radius:24px;box-shadow:0 2px 5px 1px rgba(64,60,67,.15)"></div>
<div class="t" style="left:247px;top:131px;font-size:16px;line-height:24px;color:#202124;">てすと</div>
<svg class="i" style="left:606.5px;top:129.5px" width="25" height="25" viewBox="0 0 24 24" fill="#70757a" ><path d="M19 6.41L17.59 5 12 10.59 6.41 5 5 6.41 10.59 12 5 17.59 6.41 19 12 13.41 17.59 19 19 17.59 13.41 12z"/></svg>
<div class="b" style="left:643.5px;top:128px;width:1px;height:28px;background:#e2e4e7"></div>
<svg class="i" style="left:658px;top:130px" width="24" height="24" viewBox="0 0 24 24"><rect x="9" y="2" width="6" height="12" rx="3" fill="#4285f4"/><path d="M11 18.920h2V22h-2z" fill="#34a853"/><path d="M7 12H5c0 1.930.780 3.680 2.050 4.950l1.410-1.410C7.560 14.630 7 13.380 7 12z" fill="#fbbc05"/><path d="M12 17c-1.380 0-2.630-.560-3.540-1.470l-1.410 1.410C8.320 18.220 10.070 19 12 19c3.870 0 7-3.130 7-7h-2c0 2.760-2.240 5-5 5z" fill="#ea4335"/></svg>
<svg class="i" style="left:699px;top:130px" width="24" height="24" viewBox="0 0 24 24"><path d="M4 8V6.500A2.500 2.500 0 0 1 6.500 4H9" fill="none" stroke="#ea4335" stroke-width="2.400" stroke-linecap="round"/><path d="M15 4h2.500A2.500 2.500 0 0 1 20 6.500V9" fill="none" stroke="#4285f4" stroke-width="2.400" stroke-linecap="round"/><path d="M4 15v2.500A2.500 2.500 0 0 0 6.500 20H12" fill="none" stroke="#fbbc05" stroke-width="2.400" stroke-linecap="round"/><circle cx="12" cy="12" r="3.300" fill="#4285f4"/><circle cx="18.300" cy="18.300" r="2" fill="#34a853"/></svg>
<svg class="i" style="left:740px;top:129.5px" width="25" height="25" viewBox="0 0 24 24" fill="#4285f4" ><path d="M15.5 14h-.79l-.28-.27C15.41 12.59 16 11.11 16 9.5 16 5.91 13.09 3 9.5 3S3 5.91 3 9.5 5.91 16 9.5 16c1.61 0 3.09-.59 4.23-1.57l.27.28v.79l5 4.99L20.49 19l-4.99-5zm-6 0C7.01 14 5 11.99 5 9.5S7.01 5 9.5 5 14 7.01 14 9.5 11.99 14 9.5 14z"/></svg>
<svg class="i" style="left:86.5px;top:196px" width="19" height="19" viewBox="0 0 16 16"><circle cx="6.800" cy="6.800" r="4.500" fill="none" stroke="#4285f4" stroke-width="1.300"/><path d="M2.300 6.800a4.500 4.500 0 0 1 4.500-4.500" fill="none" stroke="#ea4335" stroke-width="1.300"/><path d="M2.300 6.800a4.500 4.500 0 0 0 2.100 3.800" fill="none" stroke="#fbbc05" stroke-width="1.300"/><path d="M4.400 10.600a4.500 4.500 0 0 0 4 .400" fill="none" stroke="#34a853" stroke-width="1.300"/><path d="M10.200 10.200l3.800 3.800" stroke="#4285f4" stroke-width="1.500" stroke-linecap="round"/></svg>
<div class="t" style="left:109px;top:196px;font-size:14.3px;line-height:20px;color:#1a73e8;letter-spacing:0px">すべて</div>
<svg class="i" style="left:175.75px;top:196.25px" width="17.5" height="17.5" viewBox="0 0 16 16"><rect x="2" y="2" width="12" height="12" rx="1.500" fill="none" stroke="#5f6368" stroke-width="1.500"/><path d="M6.500 5.200v5.600L11 8z" fill="#5f6368"/></svg>
<div class="t" style="left:196.5px;top:196px;font-size:14.3px;line-height:20px;color:#5f6368;letter-spacing:0px">動画</div>
<svg class="i" style="left:250.75px;top:196.25px" width="17.5" height="17.5" viewBox="0 0 16 16"><rect x="2" y="2" width="12" height="12" rx="1.500" fill="none" stroke="#5f6368" stroke-width="1.500"/><path d="M4 12l2.500-3.200 1.800 2.200 1.500-1.700L12 12z" fill="#5f6368"/></svg>
<div class="t" style="left:271.5px;top:196px;font-size:14.3px;line-height:20px;color:#5f6368;letter-spacing:0px">画像</div>
<svg class="i" style="left:325.75px;top:196.25px" width="17.5" height="17.5" viewBox="0 0 16 16"><rect x="1.800" y="2.500" width="12.400" height="11" rx="1.200" fill="none" stroke="#5f6368" stroke-width="1.500"/><rect x="4" y="5" width="4" height="3.500" fill="#5f6368"/><path d="M9.500 5.500h2.500M9.500 8h2.500M4 10.800h8" stroke="#5f6368" stroke-width="1.200"/></svg>
<div class="t" style="left:348px;top:196px;font-size:14.3px;line-height:20px;color:#5f6368;letter-spacing:-0.45px">ニュース</div>
<svg class="i" style="left:424.5px;top:197px" width="16" height="16" viewBox="0 0 16 16"><path d="M8.700 1.800h5.500v5.500l-6.800 6.800a1 1 0 0 1-1.400 0L1.900 10a1 1 0 0 1 0-1.400z" fill="none" stroke="#5f6368" stroke-width="1.500" stroke-linejoin="round"/><circle cx="11.300" cy="4.700" r="1" fill="#5f6368"/></svg>
<div class="t" style="left:445px;top:196px;font-size:14.3px;line-height:20px;color:#5f6368;letter-spacing:-0.45px">ショッピング</div>
<svg class="i" style="left:541px;top:196px" width="6" height="18" viewBox="0 0 6 18"><circle cx="3" cy="4.4" r="1.25" fill="#5f6368"/><circle cx="3" cy="9" r="1.25" fill="#5f6368"/><circle cx="3" cy="13.6" r="1.25" fill="#5f6368"/></svg>
<div class="t" style="left:552px;top:196px;font-size:14.3px;line-height:20px;color:#5f6368;letter-spacing:-0.45px">もっと見る</div>
<div class="t" style="left:721px;top:196px;font-size:14.3px;line-height:20px;color:#5f6368;">ツール</div>
<div class="b" style="left:89px;top:222.5px;width:62px;height:3px;background:#1a73e8;border-radius:3px 3px 0 0"></div>
<div class="b" style="left:0px;top:226.5px;width:1280px;height:1px;background:#e4e6e9"></div>
<div class="t" style="left:90px;top:241px;font-size:14.3px;line-height:20px;color:#70757a;letter-spacing:0.35px">約 2,410,000 件 (0.42 秒)</div>
<div class="t" style="left:90px;top:275px;font-size:17.3px;line-height:26px;color:#1a0dab;"><span style="color:#d93025">もしかして:</span> <b style="color:#1a0dab;font-weight:700">テスト</b></div>
<div class="t" style="left:90px;top:335px;font-size:14.3px;line-height:20px;color:#70757a;"><span style="color:#70757a">検索結果：</span><b style="color:#202124;font-weight:700">東京都新宿区</b> <span style="color:#70757a">-</span> <span style="color:#1a0dab">地域を選択</span></div>
<svg class="i" style="left:346px;top:335px" width="6" height="18" viewBox="0 0 6 18"><circle cx="3" cy="4.4" r="1.25" fill="#70757a"/><circle cx="3" cy="9" r="1.25" fill="#70757a"/><circle cx="3" cy="13.6" r="1.25" fill="#70757a"/></svg>
<div class="b" style="left:89.5px;top:390px;width:28px;height:28px;background:#f1f3f4;border-radius:50%"></div>
<svg class="i" style="left:93.25px;top:393.75px" width="20.5" height="20.5" viewBox="0 0 18 18"><circle cx="9" cy="9" r="7.200" fill="#fff" stroke="#111" stroke-width="1.900"/><path d="M5.800 6.200h5.800v5.600H5.800" fill="none" stroke="#111" stroke-width="1.700"/></svg>
<div class="t" style="left:131px;top:386.5px;font-size:14.5px;line-height:20px;color:#202124;letter-spacing:-1px">コトバンク</div>
<div class="t" style="left:131px;top:408px;font-size:12.4px;line-height:18px;color:#4d5156;">https://kotobank.jp › word › テスト-6362</div>
<svg class="i" style="left:356.5px;top:407px" width="6" height="18" viewBox="0 0 6 18"><circle cx="3" cy="4.4" r="1.25" fill="#4d5156"/><circle cx="3" cy="9" r="1.25" fill="#4d5156"/><circle cx="3" cy="13.6" r="1.25" fill="#4d5156"/></svg>
<div class="t" style="left:89px;top:430.6px;font-size:20.2px;line-height:28px;color:#1a0dab;">テスト(てすと)とは？ 意味や使い方</div>
<div class="t" style="left:89px;top:463px;font-size:14.3px;line-height:22px;color:#4d5156;">検査。能力・興味などの心理的特性の存否や程度を明らかにする目的で、一定の条件のもとで課題や作</div>
<div class="t" style="left:89px;top:486.4px;font-size:14.3px;line-height:22px;color:#4d5156;">業を与え、その結果を所定の基準に照らして判定する組織的手続をいう。</div>
<div class="b" style="left:89.5px;top:558.3px;width:28px;height:28px;background:#f1f3f4;border-radius:50%"></div>
<div class="b" style="left:94.5px;top:563.3px;width:18px;height:18px;background:#1b4a9c;border-radius:2px"></div>
<div class="t np" style="left:96.8px;top:564.8px;font-size:14px;line-height:16px;color:#fff;"><b>W</b></div>
<div class="t" style="left:131px;top:553.6px;font-size:14.5px;line-height:20px;color:#202124;">Weblio辞書</div>
<div class="t" style="left:131px;top:574px;font-size:12.4px;line-height:18px;color:#4d5156;">https://www.weblio.jp › content › てすと</div>
<svg class="i" style="left:353.5px;top:573px" width="6" height="18" viewBox="0 0 6 18"><circle cx="3" cy="4.4" r="1.25" fill="#4d5156"/><circle cx="3" cy="9" r="1.25" fill="#4d5156"/><circle cx="3" cy="13.6" r="1.25" fill="#4d5156"/></svg>
<div class="t" style="left:89px;top:598px;font-size:20.2px;line-height:28px;color:#1a0dab;word-spacing:3.5px">「てすと」の意味や使い方 わかりやすく解説 ...</div>
<div class="t" style="left:89px;top:630px;font-size:14.3px;line-height:22px;color:#4d5156;">「てすと」の意味は 読み方：てすと 学力・能力などの状態や度合いを試すこと。Weblio国語辞典では「て</div>
<div class="t" style="left:89px;top:652px;font-size:14.3px;line-height:22px;color:#4d5156;">すと」の意味や使い方、用例、類似表現などを解説しています。</div>
<div class="t" style="left:89px;top:718.4px;font-size:22.6px;line-height:30px;color:#202124;">関連する質問</div>
<svg class="i" style="left:239.5px;top:724.4px" width="6" height="18" viewBox="0 0 6 18"><circle cx="3" cy="4.4" r="1.25" fill="#70757a"/><circle cx="3" cy="9" r="1.25" fill="#70757a"/><circle cx="3" cy="13.6" r="1.25" fill="#70757a"/></svg>
<div class="b" style="left:89px;top:756.1px;width:671px;height:1px;background:#dfe1e5"></div>
<div class="b" style="left:89px;top:806.2px;width:671px;height:1px;background:#dfe1e5"></div>
<div class="b" style="left:89px;top:856.5px;width:671px;height:1px;background:#dfe1e5"></div>
<div class="t" style="left:89px;top:770px;font-size:16.2px;line-height:24px;color:#202124;">Testとはどういう意味ですか？</div>
<svg class="i" style="left:737px;top:770px" width="24" height="24" viewBox="0 0 24 24" fill="#5f6368" ><path d="M16.59 8.59L12 13.17 7.41 8.59 6 10l6 6 6-6z"/></svg>
<div class="t" style="left:89px;top:820px;font-size:16.2px;line-height:24px;color:#202124;">「Test」の読み方は？</div>
<svg class="i" style="left:737px;top:820px" width="24" height="24" viewBox="0 0 24 24" fill="#5f6368" ><path d="M16.59 8.59L12 13.17 7.41 8.59 6 10l6 6 6-6z"/></svg>
<div class="t" style="left:89px;top:870px;font-size:16.2px;line-height:24px;color:#202124;">Testは自動詞と他動詞のどちらですか？</div>
<svg class="i" style="left:737px;top:870px" width="24" height="24" viewBox="0 0 24 24" fill="#5f6368" ><path d="M16.59 8.59L12 13.17 7.41 8.59 6 10l6 6 6-6z"/></svg>
<div class="b" style="left:1265px;top:89px;width:13px;height:813px;background:#f4f4f4;border-left:1px solid #e9e9e9"></div><svg class="i" style="left:1267px;top:893px" width="9" height="6" viewBox="0 0 9 6"><path d="M0 0h9L4.500 6z" fill="#5c5c5c"/></svg>
<div class="b" style="left:0px;top:0px;width:1280px;height:90px;background:#3c3c3c"></div>
<div class="b" style="left:0px;top:0px;width:1280px;height:41px;background:linear-gradient(rgba(255,255,255,.04) 0,rgba(255,255,255,0) 6px,rgba(0,0,0,0) 26px,rgba(0,0,0,.10) 41px),linear-gradient(90deg,#313242 0,#323443 20%,#353b4a 55%,#343c4d 100%)"></div>
<div class="b" style="left:41px;top:6px;width:241px;height:36px;background:#3c3c3c;border-radius:10px 10px 0 0"></div>
<svg class="i" style="left:31px;top:31.5px" width="10" height="10" viewBox="0 0 10 10"><path d="M10 0v10H0A10 10 0 0 0 10 0z" fill="#3c3c3c"/></svg>
<svg class="i" style="left:282px;top:31.5px" width="10" height="10" viewBox="0 0 10 10"><path d="M0 0v10h10A10 10 0 0 1 0 0z" fill="#3c3c3c"/></svg>
<div class="b" style="left:0px;top:87.5px;width:1280px;height:1.5px;background:#2f2f2f"></div>
<svg class="i" style="left:13px;top:13px" width="18" height="18" viewBox="0 0 24 24" fill="#e3e3e3" ><path d="M16.59 8.59L12 13.17 7.41 8.59 6 10l6 6 6-6z"/></svg>
<div class="b" style="left:50px;top:13.5px;width:17px;height:17px;background:#fff;border-radius:50%"></div>
<svg class="i" style="left:51.5px;top:15px" width="14" height="14" viewBox="0 0 24 24"><path d="M21.6 12.2c0-.7-.1-1.4-.2-2H12v3.9h5.4c-.2 1.2-.9 2.3-2 3v2.5h3.2c1.9-1.7 3-4.3 3-7.4z" fill="#4285f4"/><path d="M12 22c2.7 0 5-.9 6.6-2.4l-3.2-2.5c-.9.6-2 1-3.4 1-2.6 0-4.800-1.800-5.600-4.100H3.100v2.600C4.700 19.800 8.100 22 12 22z" fill="#34a853"/><path d="M6.400 14c-.2-.6-.3-1.300-.3-2s.1-1.400.3-2V7.400H3.100C2.400 8.800 2 10.300 2 12s.4 3.200 1.100 4.600l3.300-2.600z" fill="#fbbc05"/><path d="M12 5.900c1.500 0 2.800.5 3.800 1.500l2.900-2.900C17 2.900 14.700 2 12 2 8.100 2 4.700 4.200 3.100 7.400l3.300 2.600C7.200 7.700 9.400 5.900 12 5.900z" fill="#ea4335"/></svg>
<div class="t" style="left:75px;top:14.5px;font-size:13.2px;line-height:16px;color:#e3e3e3;letter-spacing:0.35px">てすと - Google 検索</div>
<svg class="i" style="left:257.5px;top:14.5px" width="15" height="15" viewBox="0 0 24 24" fill="#e3e3e3" ><path d="M19 6.41L17.59 5 12 10.59 6.41 5 5 6.41 10.59 12 5 17.59 6.41 19 12 13.41 17.59 19 19 17.59 13.41 12z"/></svg>
<div class="b" style="left:288px;top:8px;width:28px;height:28px;background:#1d202b;border-radius:50%"></div>
<svg class="i" style="left:293px;top:13px" width="18" height="18" viewBox="0 0 24 24" fill="#e3e3e3" ><path d="M19 13h-6v6h-2v-6H5v-2h6V5h2v6h6v2z"/></svg>
<div class="b" style="left:1201.5px;top:15.5px;width:13px;height:13px;background:#f0cb78;border-radius:50%"></div>
<div class="b" style="left:1225.5px;top:15.5px;width:13px;height:13px;background:#9abd73;border-radius:50%"></div>
<div class="b" style="left:1250.5px;top:15.5px;width:13px;height:13px;background:#d65a62;border-radius:50%"></div>
<svg class="i" style="left:14.5px;top:56.5px" width="19" height="19" viewBox="0 0 24 24" fill="#e3e3e3" ><path d="M20 11H7.83l5.59-5.59L12 4l-8 8 8 8 1.41-1.41L7.83 13H20v-2z"/></svg>
<svg class="i" style="left:51.5px;top:56.5px" width="19" height="19" viewBox="0 0 24 24" fill="#7d7d7d" ><path d="M12 4l-1.41 1.41L16.17 11H4v2h12.17l-5.58 5.59L12 20l8-8z"/></svg>
<svg class="i" style="left:88.5px;top:56.5px" width="19" height="19" viewBox="0 0 24 24" fill="#e3e3e3" ><path d="M17.65 6.35C16.2 4.9 14.21 4 12 4c-4.42 0-7.99 3.58-7.99 8s3.57 8 7.99 8c3.73 0 6.84-2.55 7.73-6h-2.08c-.82 2.33-3.04 4-5.65 4-3.31 0-6-2.69-6-6s2.69-6 6-6c1.66 0 3.14.69 4.22 1.78L13 11h7V4l-2.35 2.35z"/></svg>
<div class="b" style="left:126px;top:49px;width:931px;height:34px;background:#282828;border-radius:17px"></div>
<div class="b" style="left:130px;top:53px;width:26px;height:26px;background:#3c3c3c;border-radius:50%"></div>
<svg class="i" style="left:135px;top:58px" width="16" height="16" viewBox="0 0 16 16"><g stroke="#e3e3e3" stroke-width="2" fill="none" stroke-linecap="round"><path d="M1.500 5h6"/><path d="M8.500 11h6"/></g><circle cx="11.500" cy="5" r="2.200" fill="none" stroke="#e3e3e3" stroke-width="1.800"/><circle cx="4.500" cy="11" r="2.200" fill="none" stroke="#e3e3e3" stroke-width="1.800"/></svg>
<div class="t np url" style="left:163px;top:55px;width:815px;overflow:hidden;font-size:14.5px;line-height:22px;color:#e3e3e3;letter-spacing:0.55px">google.com/search?q=<i>てすと</i>&amp;oq=<i>てすと</i>&amp;gs_lcrp=<span class="tl">EgZjaHJvbWUyBggAEEUYOdIBBzk4MWowajGoAgCwAgA&amp;sourceid</span><u>…</u></div>
<div class="b" style="left:978px;top:53px;width:34px;height:26px;background:#3f3f3f;border-radius:13px"></div>
<svg class="i" style="left:986px;top:57px" width="18" height="18" viewBox="0 0 24 24"><path d="M1.800 12s3.700-6.300 10.200-6.300S22.200 12 22.200 12s-3.700 6.300-10.200 6.300S1.800 12 1.800 12z" fill="none" stroke="#e3e3e3" stroke-width="1.900"/><circle cx="12" cy="12" r="2.900" fill="none" stroke="#e3e3e3" stroke-width="1.900"/><path d="M5.300 3.300l15 17" stroke="#282828" stroke-width="4.200"/><path d="M4.200 3.800l15.300 17.200" stroke="#e3e3e3" stroke-width="1.900"/></svg>
<svg class="i" style="left:1026px;top:57px" width="18" height="18" viewBox="0 0 24 24" fill="#e3e3e3" ><path d="M22 9.24l-7.19-.62L12 2 9.19 8.63 2 9.24l5.46 4.73L5.82 21 12 17.27 18.18 21l-1.63-7.03L22 9.24zM12 15.4l-3.76 2.27 1-4.28-3.32-2.88 4.38-.38L12 6.1l1.71 4.04 4.38.38-3.32 2.88 1 4.28L12 15.4z"/></svg>
<svg class="i" style="left:1076px;top:57px" width="18" height="18" viewBox="0 0 18 18"><rect x="2" y="2.500" width="14" height="13" rx="2" fill="none" stroke="#e3e3e3" stroke-width="1.800"/><rect x="9.500" y="3" width="6" height="12" fill="#e3e3e3"/></svg>
<div class="b" style="left:1110px;top:49px;width:123px;height:34px;background:#282828;border-radius:17px"></div>
<svg class="i" style="left:1118.5px;top:56.5px" width="19" height="19" viewBox="0 0 24 24"><path d="M9 3.600h6l1.800 6.200H7.200z" fill="#e3e3e3"/><rect x="1.500" y="10" width="21" height="2.700" rx=".6" fill="#e3e3e3"/><circle cx="7.300" cy="17.400" r="2.700" fill="none" stroke="#e3e3e3" stroke-width="2.300"/><circle cx="16.700" cy="17.400" r="2.700" fill="none" stroke="#e3e3e3" stroke-width="2.300"/><path d="M10 16.800q2-1.300 4 0" fill="none" stroke="#e3e3e3" stroke-width="1.700"/></svg>
<div class="t" style="left:1146px;top:58px;font-size:14.4px;line-height:20px;color:#e3e3e3;">シークレット</div>
<div class="b" style="left:1239px;top:48.5px;width:35px;height:35px;background:#6a6a6a;border-radius:50%"></div>
<svg class="i" style="left:1253.5px;top:57px" width="6" height="18" viewBox="0 0 6 18"><circle cx="3" cy="3.5" r="1.6" fill="#e3e3e3"/><circle cx="3" cy="9" r="1.6" fill="#e3e3e3"/><circle cx="3" cy="14.5" r="1.6" fill="#e3e3e3"/></svg>
<div class="b" style="left:851px;top:84px;width:422px;height:652.5px;background:#1f1f1f;border-radius:3px 11px 10px 10px;box-shadow:0 8px 18px 0 rgba(0,0,0,.22),0 2px 5px 0 rgba(0,0,0,.22),0 0 0 1px rgba(0,0,0,.18)"></div>
<div class="b" style="left:851px;top:186.9px;width:422px;height:1px;background:#444746"></div>
<div class="b" style="left:851px;top:394.5px;width:422px;height:1px;background:#444746"></div>
<div class="b" style="left:851px;top:439.5px;width:422px;height:1px;background:#444746"></div>
<div class="b" style="left:851px;top:632px;width:422px;height:1px;background:#444746"></div>
<div class="b" style="left:862px;top:196.4px;width:399px;height:41px;background:#373737;border-radius:12px"></div>
<svg class="i" style="left:875px;top:97.8px" width="17" height="17" viewBox="0 0 24 24"><path d="M3 5h18v14H3z" fill="none" stroke="#e3e3e3" stroke-width="2" stroke-linejoin="round"/><path d="M13 5v4.500h8" fill="none" stroke="#e3e3e3" stroke-width="2" stroke-linejoin="round"/></svg>
<div class="t" style="left:907.5px;top:96.8px;font-size:14.5px;line-height:20px;color:#e3e3e3;letter-spacing:-0.83px">新しいシークレット タブ</div>
<div class="t" style="right:28.5px;top:96.3px;font-size:14.4px;line-height:20px;color:#c7c7c7;letter-spacing:0.55px">Ctrl+T</div>
<svg class="i" style="left:875px;top:126.3px" width="17" height="17" viewBox="0 0 24 24"><path d="M12 5H4v14h15v-7" fill="none" stroke="#e3e3e3" stroke-width="2" stroke-linejoin="round"/><path d="M18 2v8M14 6h8" fill="none" stroke="#e3e3e3" stroke-width="2" stroke-linejoin="round"/></svg>
<div class="t" style="left:907.5px;top:125.3px;font-size:14.5px;line-height:20px;color:#e3e3e3;letter-spacing:-0.87px">新しいウィンドウ</div>
<div class="t" style="right:28.5px;top:124.8px;font-size:14.4px;line-height:20px;color:#c7c7c7;letter-spacing:0.55px">Ctrl+N</div>
<svg class="i" style="left:875.75px;top:155.55px" width="15.5" height="15.5" viewBox="0 0 24 24"><path d="M9 3.600h6l1.800 6.200H7.200z" fill="#e3e3e3"/><rect x="1.500" y="10" width="21" height="2.700" rx=".6" fill="#e3e3e3"/><circle cx="7.300" cy="17.400" r="2.700" fill="none" stroke="#e3e3e3" stroke-width="2.300"/><circle cx="16.700" cy="17.400" r="2.700" fill="none" stroke="#e3e3e3" stroke-width="2.300"/><path d="M10 16.800q2-1.300 4 0" fill="none" stroke="#e3e3e3" stroke-width="1.700"/></svg>
<div class="t" style="left:907.5px;top:153.8px;font-size:14.5px;line-height:20px;color:#e3e3e3;letter-spacing:-0.8px">新しいシークレット ウィンドウ</div>
<div class="t" style="right:28.5px;top:153.3px;font-size:14.4px;line-height:20px;color:#c7c7c7;letter-spacing:0.55px">Ctrl+Shift+N</div>
<div class="b" style="left:871px;top:204.1px;width:25px;height:25px;background:#b9b9b9;border-radius:50%"></div>
<svg class="i" style="left:874.5px;top:207.6px" width="18" height="18" viewBox="0 0 24 24"><path d="M9 3.600h6l1.800 6.200H7.200z" fill="#2a2a2a"/><rect x="1.500" y="10" width="21" height="2.700" rx=".6" fill="#2a2a2a"/><circle cx="7.300" cy="17.400" r="2.700" fill="none" stroke="#2a2a2a" stroke-width="2.300"/><circle cx="16.700" cy="17.400" r="2.700" fill="none" stroke="#2a2a2a" stroke-width="2.300"/><path d="M10 16.800q2-1.300 4 0" fill="none" stroke="#2a2a2a" stroke-width="1.700"/></svg>
<div class="t" style="left:907.5px;top:207.1px;font-size:14.5px;line-height:20px;color:#e3e3e3;letter-spacing:-0.65px">シークレット モード</div>
<svg class="i" style="left:1239.5px;top:208.1px" width="17" height="17" viewBox="0 0 24 24" fill="#c7c7c7" ><path d="M9 6l7 6-7 6z"/></svg>
<svg class="i" style="left:875px;top:247.2px" width="17" height="17" viewBox="0 0 24 24"><circle cx="6.800" cy="12" r="3.600" fill="none" stroke="#e3e3e3" stroke-width="2.600"/><path d="M10.500 12h11.500v3.800M17.500 12v3.300" fill="none" stroke="#e3e3e3" stroke-width="2.600"/></svg>
<div class="t" style="left:907.5px;top:246.2px;font-size:14.5px;line-height:20px;color:#e3e3e3;letter-spacing:0px">パスワードと自動入力</div>
<svg class="i" style="left:1239.5px;top:247.2px" width="17" height="17" viewBox="0 0 24 24" fill="#c7c7c7" ><path d="M9 6l7 6-7 6z"/></svg>
<svg class="i" style="left:875px;top:275.9px" width="17" height="17" viewBox="0 0 24 24"><path d="M12 4v10.500M7 10l5 5 5-5M5 19.500h14" fill="none" stroke="#e3e3e3" stroke-width="2" stroke-linejoin="round"/></svg>
<div class="t" style="left:907.5px;top:274.9px;font-size:14.5px;line-height:20px;color:#e3e3e3;letter-spacing:-0.73px">ダウンロード</div>
<div class="t" style="right:28.5px;top:274.4px;font-size:14.4px;line-height:20px;color:#c7c7c7;letter-spacing:0.55px">Ctrl+J</div>
<svg class="i" style="left:874.25px;top:304.05px" width="18.5" height="18.5" viewBox="0 0 24 24" fill="#e3e3e3" ><path d="M22 9.24l-7.19-.62L12 2 9.19 8.63 2 9.24l5.46 4.73L5.82 21 12 17.27 18.18 21l-1.63-7.03L22 9.24zM12 15.4l-3.76 2.27 1-4.28-3.32-2.88 4.38-.38L12 6.1l1.71 4.04 4.38.38-3.32 2.88 1 4.28L12 15.4z"/></svg>
<div class="t" style="left:907.5px;top:303.8px;font-size:14.5px;line-height:20px;color:#e3e3e3;letter-spacing:-0.65px">ブックマークとリスト</div>
<svg class="i" style="left:1239.5px;top:304.8px" width="17" height="17" viewBox="0 0 24 24" fill="#c7c7c7" ><path d="M9 6l7 6-7 6z"/></svg>
<svg class="i" style="left:875px;top:333.9px" width="17" height="17" viewBox="0 0 24 24"><path d="M4 8H8.200a2.300 2.300 0 1 1 4.600 0H17V12.200a2.300 2.300 0 1 1 0 4.600V21H4V16.800a2.300 2.300 0 1 0 0-4.600z" fill="none" stroke="#e3e3e3" stroke-width="2" stroke-linejoin="round"/></svg>
<div class="t" style="left:907.5px;top:332.9px;font-size:14.5px;line-height:20px;color:#e3e3e3;letter-spacing:0px">拡張機能</div>
<svg class="i" style="left:1239.5px;top:333.9px" width="17" height="17" viewBox="0 0 24 24" fill="#c7c7c7" ><path d="M9 6l7 6-7 6z"/></svg>
<svg class="i" style="left:875px;top:362.8px" width="17" height="17" viewBox="0 0 24 24"><path d="M6.500 7.500h11V20h-11z" fill="none" stroke="#e3e3e3" stroke-width="2" stroke-linejoin="round"/><path d="M4 5.500h16M9.500 3.500h5" fill="none" stroke="#e3e3e3" stroke-width="2" stroke-linejoin="round"/><path d="M10 11v5.500M14 11v5.500" fill="none" stroke="#e3e3e3" stroke-width="1.500"/></svg>
<div class="t" style="left:907.5px;top:361.8px;font-size:14.5px;line-height:20px;color:#e3e3e3;letter-spacing:0px">閲覧履歴を消去<u class="e">…</u></div>
<div class="t" style="right:28.5px;top:361.3px;font-size:14.4px;line-height:20px;color:#c7c7c7;letter-spacing:0.55px">Ctrl+Shift+Delete</div>
<svg class="i" style="left:875px;top:408px" width="17" height="17" viewBox="0 0 24 24" fill="#e3e3e3" ><path d="M15.5 14h-.79l-.28-.27C15.41 12.59 16 11.11 16 9.5 16 5.91 13.09 3 9.5 3S3 5.91 3 9.5 5.91 16 9.5 16c1.61 0 3.09-.59 4.23-1.57l.27.28v.79l5 4.99L20.49 19l-4.99-5zm-6 0C7.01 14 5 11.99 5 9.5S7.01 5 9.5 5 14 7.01 14 9.5 11.99 14 9.5 14zM12 10h-2v2H9v-2H7V9h2V7h1v2h2v1z"/></svg>
<div class="t" style="left:907.5px;top:407px;font-size:14.5px;line-height:20px;color:#e3e3e3;letter-spacing:-0.3px">ズーム</div>
<div class="b" style="left:1089px;top:403.5px;width:26px;height:26px;background:#252525;border-radius:50%"></div>
<div class="b" style="left:1180.5px;top:403.5px;width:26px;height:26px;background:#252525;border-radius:50%"></div>
<div class="b" style="left:1098px;top:415.7px;width:8px;height:1.6px;background:#c8c8c8"></div>
<div class="b" style="left:1190px;top:415.7px;width:7px;height:1.6px;background:#c8c8c8"></div>
<div class="b" style="left:1192.7px;top:413px;width:1.6px;height:7px;background:#c8c8c8"></div>
<div class="t np" style="left:1117px;width:60px;text-align:center;top:407px;font-size:14.4px;line-height:20px;color:#e3e3e3;letter-spacing:0.55px">100%</div>
<div class="b" style="left:1218.5px;top:403.5px;width:1px;height:26px;background:#444746"></div>
<svg class="i" style="left:1235.5px;top:407px" width="19" height="19" viewBox="0 0 24 24" fill="#e3e3e3" ><path d="M7 14H5v5h5v-2H7v-3zm-2-4h2V7h3V5H5v5zm12 7h-3v2h5v-5h-2v3zM14 5v2h3v3h2V5h-5z"/></svg>
<svg class="i" style="left:874.5px;top:455.6px" width="18" height="18" viewBox="0 0 24 24"><path d="M6.500 8V3.500h11V8" fill="none" stroke="#e3e3e3" stroke-width="2" stroke-linejoin="round"/><rect x="3" y="8" width="18" height="9" rx="2.500" fill="none" stroke="#e3e3e3" stroke-width="2" stroke-linejoin="round"/><path d="M7 14h10v6.500H7z" fill="#1f1f1f" stroke="#e3e3e3" stroke-width="2" stroke-linejoin="round"/><circle cx="17.500" cy="11.200" r="1" fill="#e3e3e3"/></svg>
<div class="t" style="left:907.5px;top:455.1px;font-size:14.5px;line-height:20px;color:#e3e3e3;letter-spacing:0px">印刷<u class="e">…</u></div>
<div class="t" style="right:28.5px;top:454.6px;font-size:14.4px;line-height:20px;color:#c7c7c7;letter-spacing:0.55px">Ctrl+P</div>
<div class="t np" style="left:876px;top:483.9px;font-size:18.5px;line-height:20px;color:#e3e3e3;-webkit-text-stroke:.6px #e3e3e3"><b>G</b></div>
<div class="t" style="left:907.5px;top:483.9px;font-size:14.5px;line-height:20px;color:#e3e3e3;letter-spacing:-0.1px">Google でこのページを検索<u class="e">…</u></div>
<svg class="i" style="left:875px;top:513.7px" width="17" height="17" viewBox="0 0 24 24"><path d="M3 3h11v12H3z" fill="#e3e3e3" stroke="#e3e3e3" stroke-width="2" stroke-linejoin="round"/><path d="M5.500 7h6M8.500 5.500v1.500M6 12c2.200-1 3.800-2.800 4.300-5" fill="none" stroke="#1f1f1f" stroke-width="1.500"/><path d="M14 9h7v12H10v-6" fill="none" stroke="#e3e3e3" stroke-width="2" stroke-linejoin="round"/><path d="M13.200 18.500l2.300-6 2.300 6M14 17h3" fill="none" stroke="#e3e3e3" stroke-width="1.400"/></svg>
<div class="t" style="left:907.5px;top:512.7px;font-size:14.5px;line-height:20px;color:#e3e3e3;letter-spacing:0px">翻訳<u class="e">…</u></div>
<svg class="i" style="left:875px;top:542.5px" width="17" height="17" viewBox="0 0 24 24"><path d="M5 3h9l5 5v13H5z" fill="none" stroke="#e3e3e3" stroke-width="2" stroke-linejoin="round"/><circle cx="11.500" cy="13" r="2.800" fill="none" stroke="#e3e3e3" stroke-width="1.800"/><path d="M13.500 15l2.500 2.500" stroke="#e3e3e3" stroke-width="1.800"/></svg>
<div class="t" style="left:907.5px;top:541.5px;font-size:14.5px;line-height:20px;color:#e3e3e3;letter-spacing:-0.2px">検索と編集</div>
<svg class="i" style="left:1239.5px;top:542.5px" width="17" height="17" viewBox="0 0 24 24" fill="#c7c7c7" ><path d="M9 6l7 6-7 6z"/></svg>
<svg class="i" style="left:875px;top:572.1px" width="17" height="17" viewBox="0 0 24 24"><path d="M19 12V8l-5-5H5v18h7" fill="none" stroke="#e3e3e3" stroke-width="2" stroke-linejoin="round"/><path d="M13 3v6h6" fill="none" stroke="#e3e3e3" stroke-width="2" stroke-linejoin="round"/><path d="M15 18h7M19 15l3 3-3 3" fill="none" stroke="#e3e3e3" stroke-width="2" stroke-linejoin="round"/></svg>
<div class="t" style="left:907.5px;top:571.1px;font-size:14.5px;line-height:20px;color:#e3e3e3;letter-spacing:-0.1px">保存して共有</div>
<svg class="i" style="left:1239.5px;top:572.1px" width="17" height="17" viewBox="0 0 24 24" fill="#c7c7c7" ><path d="M9 6l7 6-7 6z"/></svg>
<svg class="i" style="left:875px;top:601.3px" width="17" height="17" viewBox="0 0 24 24"><rect x="3" y="8" width="18" height="12" rx="2" fill="none" stroke="#e3e3e3" stroke-width="2" stroke-linejoin="round"/><path d="M9 8V4.500h6V8M3 13.500h18" fill="none" stroke="#e3e3e3" stroke-width="2" stroke-linejoin="round"/></svg>
<div class="t" style="left:907.5px;top:600.3px;font-size:14.5px;line-height:20px;color:#e3e3e3;letter-spacing:-0.2px">その他のツール</div>
<svg class="i" style="left:1239.5px;top:601.3px" width="17" height="17" viewBox="0 0 24 24" fill="#c7c7c7" ><path d="M9 6l7 6-7 6z"/></svg>
<svg class="i" style="left:875px;top:647.5px" width="17" height="17" viewBox="0 0 24 24" fill="#e3e3e3" ><path d="M11 18h2v-2h-2v2zm1-16C6.48 2 2 6.48 2 12s4.48 10 10 10 10-4.48 10-10S17.52 2 12 2zm0 18c-4.41 0-8-3.59-8-8s3.59-8 8-8 8 3.59 8 8-3.59 8-8 8zm0-14c-2.21 0-4 1.79-4 4h2c0-1.1.9-2 2-2s2 .9 2 2c0 2-3 1.75-3 5h2c0-2.25 3-2.5 3-5 0-2.21-1.79-4-4-4z"/></svg>
<div class="t" style="left:907.5px;top:646.5px;font-size:14.5px;line-height:20px;color:#e3e3e3;letter-spacing:0px">ヘルプ</div>
<svg class="i" style="left:1239.5px;top:647.5px" width="17" height="17" viewBox="0 0 24 24" fill="#c7c7c7" ><path d="M9 6l7 6-7 6z"/></svg>
<svg class="i" style="left:874.5px;top:676px" width="18" height="18" viewBox="0 0 24 24"><path d="M19.14 12.94c.04-.3.06-.61.06-.94 0-.32-.02-.64-.07-.94l2.03-1.58c.18-.14.23-.41.12-.61l-1.92-3.32c-.12-.22-.37-.29-.59-.22l-2.39.96c-.5-.38-1.03-.7-1.62-.94l-.36-2.54c-.04-.24-.24-.41-.48-.41h-3.84c-.24 0-.43.17-.47.41l-.36 2.54c-.59.24-1.13.57-1.62.94l-2.39-.96c-.22-.08-.47 0-.59.22L2.74 8.87c-.12.21-.08.47.12.61l2.03 1.58c-.05.3-.09.63-.09.94s.02.64.07.94l-2.03 1.58c-.18.14-.23.41-.12.61l1.92 3.32c.12.22.37.29.59.22l2.39-.96c.5.38 1.03.7 1.62.94l.36 2.54c.05.24.24.41.48.41h3.84c.24 0 .44-.17.47-.41l.36-2.54c.59-.24 1.13-.56 1.62-.94l2.39.96c.22.08.47 0 .59-.22l1.92-3.32c.12-.22.07-.47-.12-.61l-2.01-1.58zM12 15.6c-1.98 0-3.6-1.62-3.6-3.6s1.62-3.6 3.6-3.6 3.6 1.62 3.6 3.6-1.62 3.6-3.6 3.6z" fill="none" stroke="#e3e3e3" stroke-width="1.700" stroke-linejoin="round"/><circle cx="12" cy="12" r="1.600" fill="#e3e3e3"/></svg>
<div class="t" style="left:907.5px;top:675.5px;font-size:14.5px;line-height:20px;color:#e3e3e3;letter-spacing:0px">設定</div>
<svg class="i" style="left:875px;top:705.5px" width="17" height="17" viewBox="0 0 24 24" fill="#e3e3e3" ><path d="M19 3H5c-1.11 0-2 .9-2 2v4h2V5h14v14H5v-4H3v4c0 1.1.89 2 2 2h14c1.1 0 2-.9 2-2V5c0-1.1-.9-2-2-2zm-8.92 12.58L11.5 17l5-5-5-5-1.42 1.41L12.67 11H3v2h9.67l-2.59 2.58z"/></svg>
<div class="t" style="left:907.5px;top:704.5px;font-size:14.5px;line-height:20px;color:#e3e3e3;letter-spacing:0px">終了</div>
<div class="b" style="left:0px;top:41px;width:2px;height:48px;background:#2c2c2c"></div><div class="b" style="left:1278px;top:41px;width:2px;height:48px;background:#2c2c2c"></div><div class="b" style="left:0px;top:89px;width:2px;height:815px;background:#757575"></div><div class="b" style="left:1278px;top:89px;width:2px;height:815px;background:#757575"></div><div class="b" style="left:0px;top:901.5px;width:1280px;height:2.5px;background:#707070"></div><div class="b" style="left:0px;top:904px;width:1280px;height:2px;background:#dcdcdc"></div>
</div>
</body></html>
